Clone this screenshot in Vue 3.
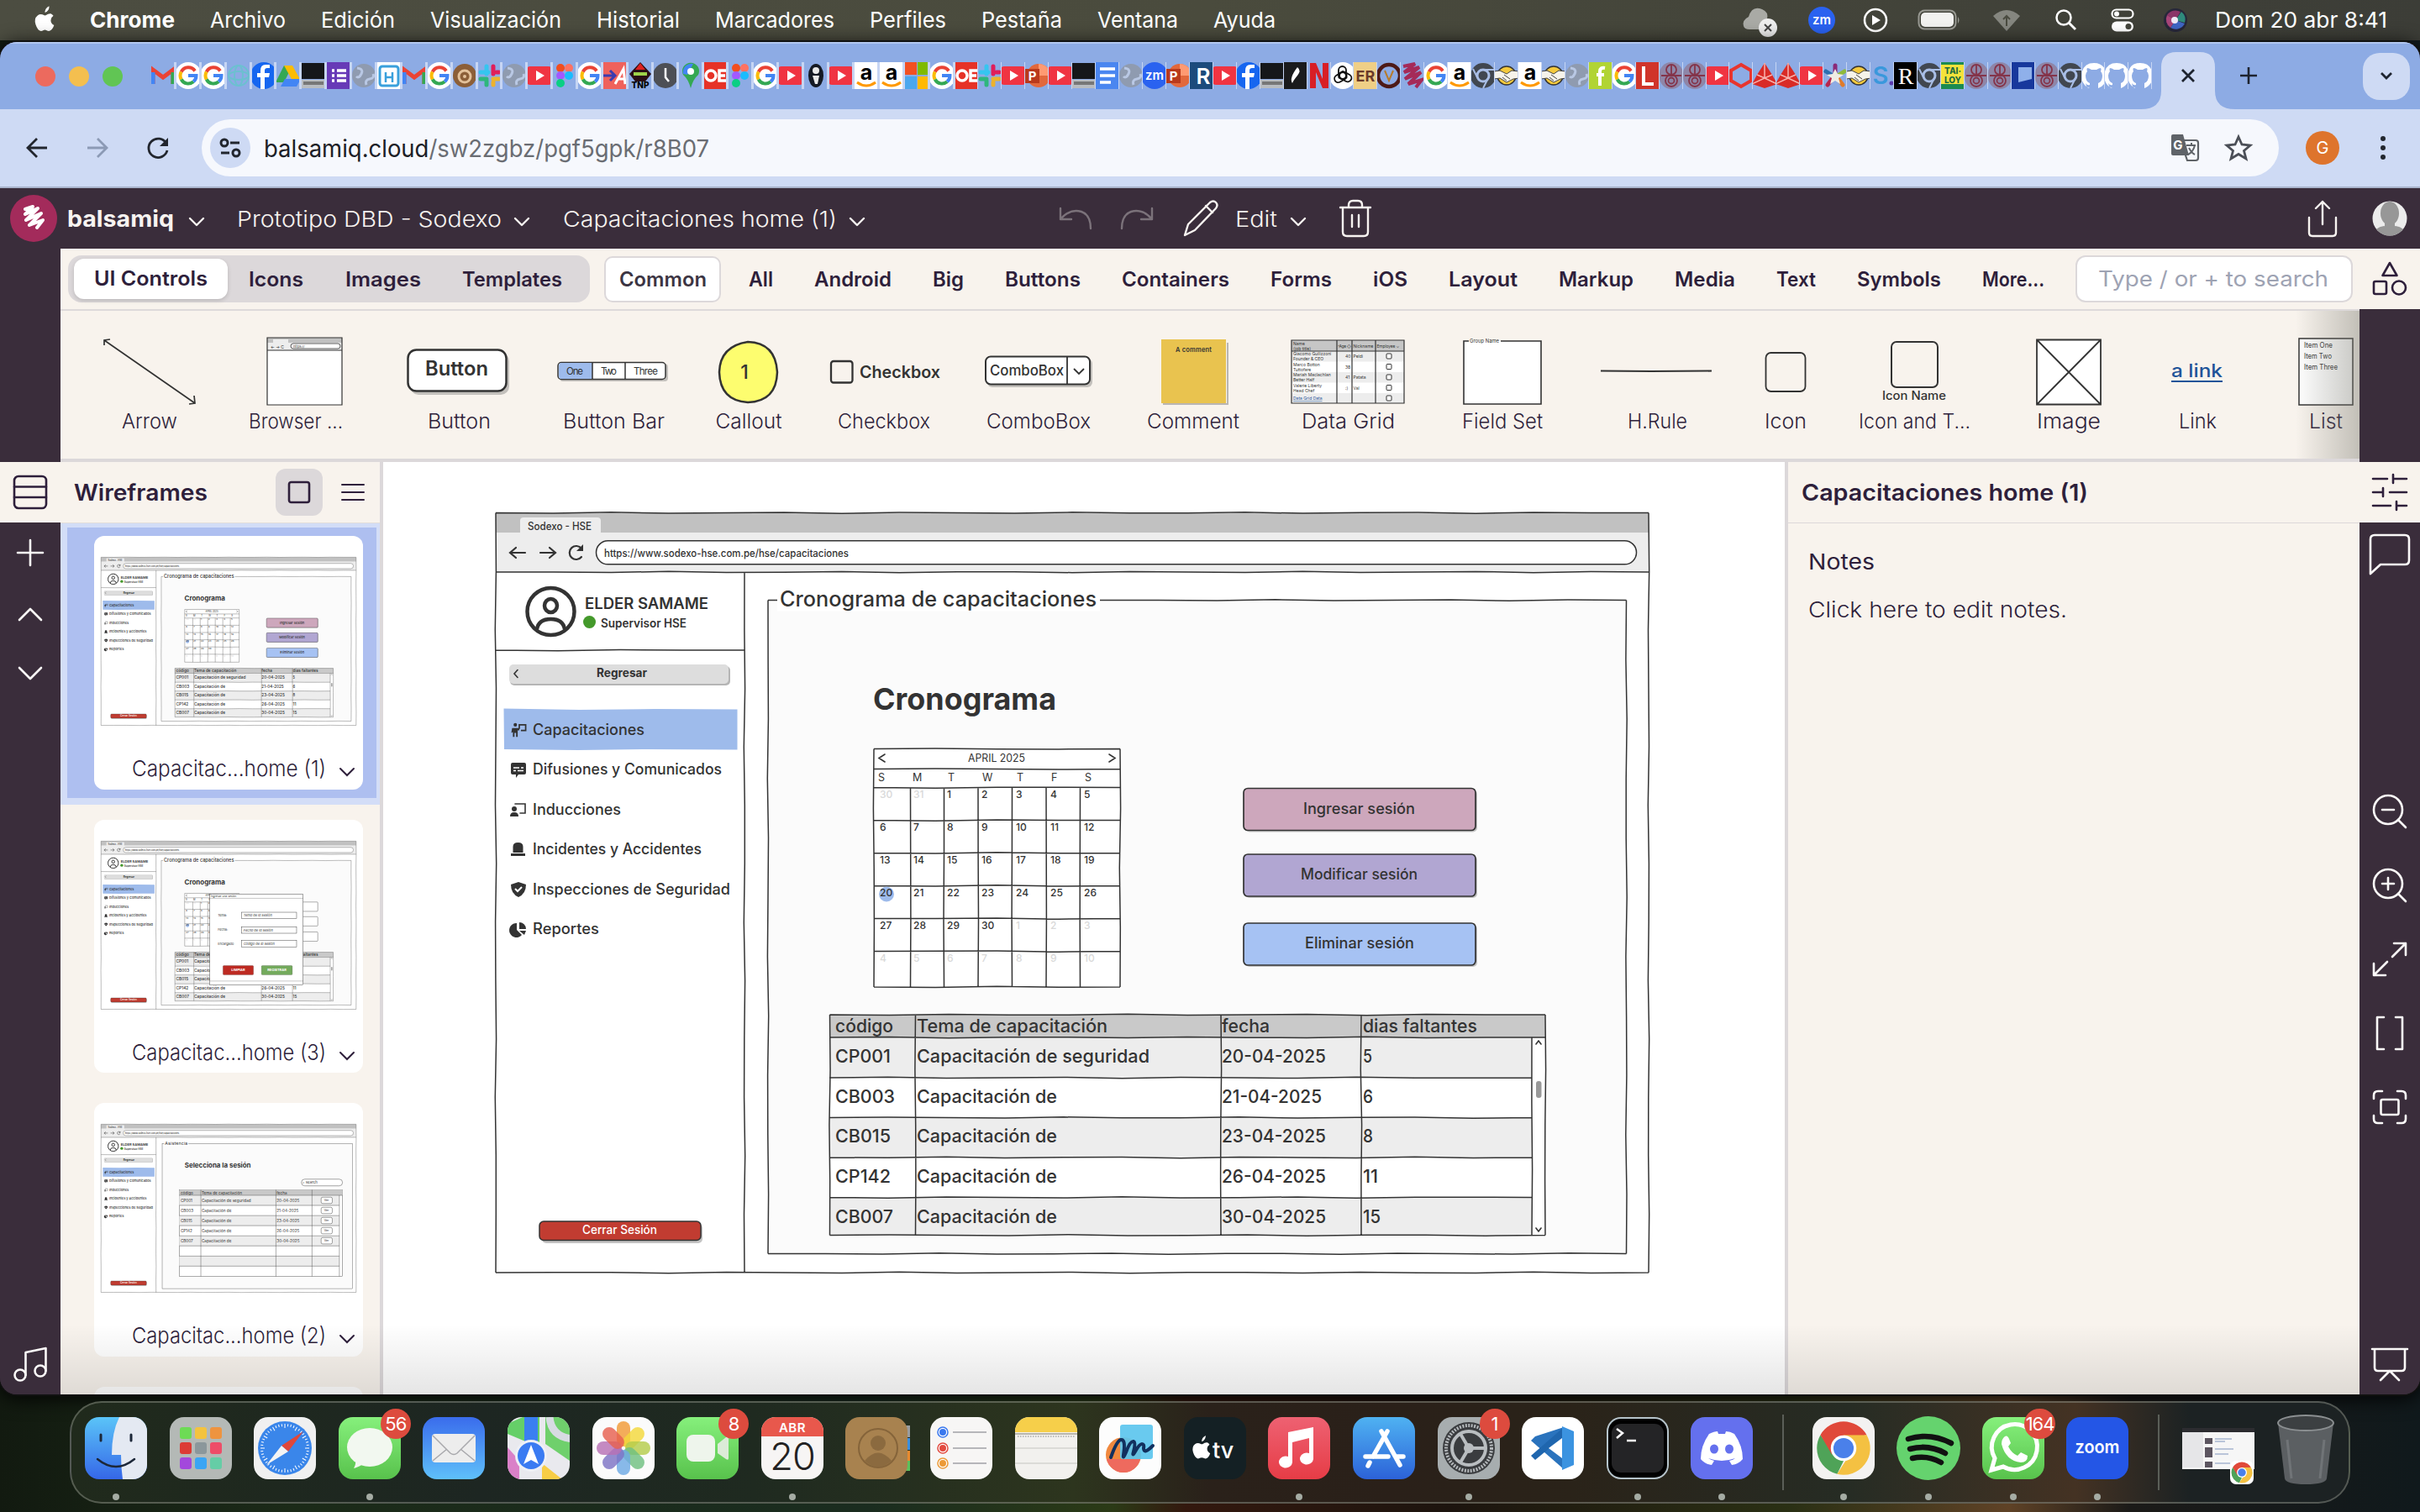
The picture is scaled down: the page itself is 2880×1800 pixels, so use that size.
<script setup>
/* Stretches a label horizontally so that it takes exactly the given width. */
const vFit = {
  mounted(el, { value }) {
    const w = el.getBoundingClientRect().width
    el.style.width = value + 'px'
    el.style.transform = `scaleX(${(value / w).toFixed(4)})`
  },
}

/* Hand-drawn line between two points, with a small deterministic wobble. */
function wob(x1, y1, x2, y2) {
  const len = Math.hypot(x2 - x1, y2 - y1)
  const steps = Math.max(1, Math.round(len / 70))
  const horizontal = y1 === y2
  let d = `M${x1} ${y1}`
  for (let i = 1; i <= steps; i++) {
    const t = i / steps
    const j = i === steps ? 0 : Math.sin(i * 2.3 + x1 * 0.7 + y1 * 1.3) * 0.7
    d += ` L${(x1 + (x2 - x1) * t + (horizontal ? 0 : j)).toFixed(1)} ${(y1 + (y2 - y1) * t + (horizontal ? j : 0)).toFixed(1)}`
  }
  return d
}
const box = (x1, y1, x2, y2) => [wob(x1, y1, x2, y1), wob(x2, y1, x2, y2), wob(x1, y2, x2, y2), wob(x1, y1, x1, y2)].join(' ')

const menus = [['Archivo', 90], ['Edición', 88], ['Visualización', 156], ['Historial', 99], ['Marcadores', 142], ['Perfiles', 91], ['Pestaña', 96], ['Ventana', 96], ['Ayuda', 74]]

const G = '<rect width="32" height="32" rx="16" fill="#fff"/><path d="M24 10.500a9.500 9.500 0 0 0-16.300 1" stroke="#ea4335" stroke-width="4" fill="none"/><path d="M7.700 11.500a9.500 9.500 0 0 0 0 9" stroke="#fbbc05" stroke-width="4" fill="none"/><path d="M7.700 20.500a9.500 9.500 0 0 0 14.500 2.800" stroke="#34a853" stroke-width="4" fill="none"/><path d="M16 16h9.500a9.500 9.500 0 0 1-3.300 7.300" stroke="#4285f4" stroke-width="4" fill="none"/>'
const fav = {
  M: '<path d="M4 26V9l12 9 12-9v17" fill="none" stroke="#ea4335" stroke-width="5"/><path d="M4 26V12" stroke="#4285f4" stroke-width="5"/><path d="M28 26V12" stroke="#34a853" stroke-width="5"/>',
  G,
  atom: '<g fill="none" stroke="#6cc0d0" stroke-width="2"><circle cx="16" cy="16" r="12"/><ellipse cx="16" cy="16" rx="12" ry="5"/><ellipse cx="16" cy="16" rx="5" ry="12"/></g>',
  f: '<circle cx="16" cy="16" r="16" fill="#1666f0"/><path d="M17 32V18h5l1-5h-6v-3q0-3 3-3h3V3h-5q-6 0-6 7v3H8v5h4v14z" fill="#fff"/>',
  drive: '<path d="M11 4h10l-10 20H1z" fill="#34a853"/><path d="M11 4h10l10 18H21z" fill="#fbbc04"/><path d="M7 29l5-9h19l-5 9z" fill="#4285f4"/>',
  lap: '<path d="M2 1h28v19H2z" fill="#15171a"/><path d="M0 21h32v10H0z" fill="#b9bcc0"/><path d="M4 23h24v4H4z" fill="#777"/>',
  forms: '<path d="M1 0h30v32H1z" fill="#673ab7"/><path d="M8 10h3m3 0h11M8 16h3m3 0h11M8 22h3m3 0h11" stroke="#fff" stroke-width="3.500"/>',
  globe: '<circle cx="16" cy="16" r="14" fill="#8f9bb0"/><path d="M8 7q8 1 5 7t-6 3M19 27q-2-6 4-7t4-6" stroke="#b9c8e4" stroke-width="3" fill="none"/>',
  H: '<rect width="32" height="32" fill="#fff"/><rect x="5" y="5" width="22" height="23" rx="3" fill="none" stroke="#3aa0dc" stroke-width="3"/><path d="M12 12v12m8-12v12m-8-6h8" stroke="#3aa0dc" stroke-width="2.500"/>',
  snail: '<circle cx="16" cy="16" r="14" fill="#8c5f38"/><circle cx="16" cy="17" r="7" fill="none" stroke="#e3c19a" stroke-width="3"/><circle cx="16" cy="17" r="2" fill="#e3c19a"/>',
  slack: '<g stroke-width="5" stroke-linecap="round"><path d="M12 5v9" stroke="#36c5f0"/><path d="M5 12h9" stroke="#36c5f0"/><path d="M20 5v9M27 12h-3" stroke="#e01e5a"/><path d="M20 20h7M20 27v-3" stroke="#ecb22e"/><path d="M5 20h7M12 27v-5" stroke="#2eb67d"/></g>',
  yt: '<rect y="5" width="32" height="22" rx="5" fill="#f03442"/><path d="M12 10l10 6-10 6z" fill="#fff"/>',
  figma: '<circle cx="11" cy="7" r="5" fill="#f24e1e"/><circle cx="21" cy="7" r="5" fill="#ff7262"/><circle cx="11" cy="16" r="5" fill="#a259ff"/><circle cx="21" cy="16" r="5" fill="#1abcfe"/><circle cx="11" cy="25" r="5" fill="#0acf83"/>',
  redA: '<rect width="32" height="32" fill="#ef625c"/><path d="M2 16h13M10 10l6 6-6 6" stroke="#3c3cae" stroke-width="3" fill="none"/><path d="M16 26L26 8l2 18M20 20h8" stroke="#fff" stroke-width="3" fill="none"/>',
  tnp: '<path d="M16 0l13 14-7 9H10L3 14z" fill="#2a1015"/><path d="M8 14h16" stroke="#9dd24a" stroke-width="4"/><path d="M16 1l6 8H10z" fill="#d22"/><text x="16" y="31" font-size="10" font-weight="800" text-anchor="middle">TNP</text>',
  clock: '<circle cx="16" cy="16" r="15" fill="#4d4f55"/><path d="M16 7v11l4 5" stroke="#fff" stroke-width="2.500" fill="none"/>',
  maps: '<path d="M16 31Q13 20 7 15a10 10 0 1 1 18 0q-6 5-9 16z" fill="#34a853"/><path d="M7 14a10 10 0 0 1 12-12l-7 13z" fill="#4285f4"/><circle cx="16" cy="11" r="4" fill="#fff"/>',
  OE: '<rect width="32" height="32" fill="#e63227"/><circle cx="10" cy="16" r="6" fill="none" stroke="#fff" stroke-width="3.500"/><path d="M28 10h-8v12h8M20 16h7" fill="none" stroke="#fff" stroke-width="3.500"/>',
  fifa: '<ellipse cx="16" cy="16" rx="9" ry="14" fill="#151a24"/><circle cx="16" cy="10" r="4" fill="#e9e9e9"/><path d="M12 16h8l-2 10h-3z" fill="#e9e9e9"/>',
  a: '<rect width="32" height="32" rx="2" fill="#fff"/><text x="16" y="21" font-size="25" font-weight="700" text-anchor="middle">a</text><path d="M5 24q11 8 22 0" stroke="#f90" stroke-width="3" fill="none"/>',
  ms: '<path d="M1 0h15v15H1z" fill="#f25022"/><path d="M17 0h15v15H17z" fill="#7fba00"/><path d="M1 17h15v15H1z" fill="#4aa7ee"/><path d="M17 17h15v15H17z" fill="#ffb900"/>',
  P: '<circle cx="18" cy="16" r="14" fill="#e2683c"/><path d="M18 2a14 14 0 0 1 14 14H18z" fill="#ff9a72"/><rect x="2" y="8" width="17" height="17" fill="#b93a1c"/><text x="10.500" y="22" font-size="15" font-weight="700" fill="#fff" text-anchor="middle">P</text>',
  docs: '<rect x="1" width="30" height="32" fill="#4a86f0"/><path d="M7 8h18M7 16h18M7 24h13" stroke="#fff" stroke-width="3.500"/>',
  zm: '<circle cx="16" cy="16" r="16" fill="#2a62f0"/><text x="16" y="21" font-size="15" font-weight="600" fill="#fff" text-anchor="middle">zm</text>',
  R: '<rect width="32" height="32" fill="#1c4b7c"/><text x="18" y="26" font-size="26" font-weight="600" fill="#fff" text-anchor="middle">R</text>',
  pen: '<rect width="32" height="32" fill="#1a1b1d"/><path d="M18 6q5 4 0 10t-6 9q-4-6 6-19z" fill="#fff"/>',
  N: '<path d="M5 1h7l8 19V1h7v30h-7L12 12v19H5z" fill="#d81f26"/>',
  gpt: '<circle cx="16" cy="16" r="16" fill="#fff"/><g fill="none" stroke="#111" stroke-width="1.800"><path d="M16 11l4.500 2.500v5L16 21l-4.500-2.500v-5z"/><rect x="11" y="5" width="9" height="15" rx="4.500"/><rect x="11" y="5" width="9" height="15" rx="4.500" transform="rotate(120 16 16)"/><rect x="11" y="5" width="9" height="15" rx="4.500" transform="rotate(240 16 16)"/></g>',
  ER: '<rect width="32" height="32" fill="#efcf86"/><text x="16" y="23" font-size="18" font-weight="700" fill="#6b3a2a" text-anchor="middle">ER</text>',
  Q: '<circle cx="16" cy="16" r="13" fill="none" stroke="#4d1a17" stroke-width="4.500"/><path d="M11 10l5 12 5-12" stroke="#b77b2c" stroke-width="2" fill="none"/>',
  bq: '<path d="M5 5l14-3L6 12l18-6L7 20l19-8L11 26l16-5-7 9" fill="none" stroke="#a52a58" stroke-width="4"/>',
  cr: '<circle cx="16" cy="16" r="15" fill="#414750"/><circle cx="16" cy="16" r="7" fill="none" stroke="#a9bee6" stroke-width="3"/><path d="M16 9h14M9 18L4 8M22 19l-6 12" stroke="#a9bee6" stroke-width="2"/>',
  hs: '<circle cx="16" cy="16" r="11" fill="#f4c93d" stroke="#333" stroke-width="1.500"/><path d="M1 11l7-1 8 4 6-4 9 1v8l-7 1-8 4-8-5-7 1z" fill="#f6f3ea" stroke="#444" stroke-width="1"/><path d="M13 15l7 5M11 18l5 4" stroke="#444"/>',
  gf: '<rect width="32" height="32" fill="#b1d434"/><path d="M15 28V11q0-5 6-4M11 15h9" stroke="#fff" stroke-width="4" fill="none"/>',
  L: '<rect width="32" height="32" fill="#d0342a"/><path d="M11 5v21h12" stroke="#fff" stroke-width="4" fill="none"/>',
  seal: '<rect x="2" y="0" width="28" height="32" rx="14" fill="#8e86a8"/><g fill="none" stroke="#84344a" stroke-width="1.800"><circle cx="16" cy="9" r="6"/><circle cx="16" cy="22" r="7"/><circle cx="16" cy="22" r="3.500"/><path d="M16 4v10M4 16h24"/></g>',
  hex: '<path d="M16 3l12 7v12l-12 7-12-7V10z" fill="none" stroke="#e8352e" stroke-width="4"/>',
  cube: '<path d="M16 1l9 14 6 11-15 5L1 26l6-11z" fill="#d92b26"/><path d="M16 1v18M16 19L1 26M16 19l15 7M7 15l9 4 9-4" stroke="#f7b3ae" stroke-width="1.500" fill="none"/>',
  fl: '<g stroke-width="5" stroke-linecap="round"><path d="M16 14V4" stroke="#8a2a78"/><path d="M19 16l8-5" stroke="#8fba3c"/><path d="M19 19l6 8" stroke="#e07b2a"/><path d="M13 19l-6 8" stroke="#b8264e"/><path d="M13 16L5 11" stroke="#2c6fb0"/></g><path d="M16 8l3 6 7 1-6 4 2 7-6-4-6 4 2-7-6-4 7-1z" fill="#f0ede4"/>',
  S: '<text x="14" y="26" font-size="29" font-weight="600" fill="#3a98dc" text-anchor="middle">S</text><circle cx="27" cy="25" r="2.500" fill="#5b3bb0"/>',
  Rb: '<rect width="32" height="32" fill="#000"/><text x="16" y="26" font-size="28" font-family="Liberation Serif,serif" fill="#fff" text-anchor="middle">R</text>',
  tl: '<rect width="32" height="32" fill="#1c8b50"/><rect x="2" y="3" width="28" height="23" fill="#f5e23b"/><text x="16" y="14" font-size="10" font-weight="800" fill="#1c6b40" text-anchor="middle">TAI·</text><text x="16" y="24.500" font-size="10" font-weight="800" fill="#1c6b40" text-anchor="middle">LOY</text>',
  bl: '<rect width="32" height="32" fill="#17389c"/><path d="M10 6h16v14l-16 4z" fill="#8fb0ea"/>',
  gh: '<path d="M11 31q-9-3-10-14 1-16 15-16t15 16q-1 11-10 14v-6q5-2 5-9 0-3-2-5 1-3 0-4-2 0-5 2h-6q-3-2-5-2-1 1 0 4-2 2-2 5 0 7 5 9v2q-3 1-5-2 1 6 5 6z" fill="#fff"/>',
}
const tabs = 'M G G atom f drive lap forms globe H M G snail slack globe yt figma G redA tnp clock maps OE figma G yt fifa yt a a ms G OE slack yt P yt lap docs globe zm P R yt f lap pen N gpt ER Q bq G a cr hs a hs globe gf G L seal seal yt hex cube cube yt fl hs S Rb cr tl seal seal bl seal cr gh gh gh'.split(' ')

const segs = [['Icons', 65], ['Images', 90], ['Templates', 119]]
const cats = [['All', 29], ['Android', 92], ['Big', 37], ['Buttons', 90], ['Containers', 128], ['Forms', 73], ['iOS', 41], ['Layout', 82], ['Markup', 89], ['Media', 72], ['Text', 47], ['Symbols', 100], ['More...', 74]]

const dk = '#333'
const grid = (() => {
  const rows = [['Giacomo Guilizzoni', 'Founder & CEO', '40', 'Peldi'], ['Marco Botton', 'Tuttofare', '38', ''], ['Mariah Maclachlan', 'Better Half', '41', 'Patata'], ['Valerie Liberty', 'Head Chef', ':)', 'Val']]
  let s = '<rect x="25" y="9" width="134" height="75" fill="#fff"/><rect x="25" y="9" width="134" height="13" fill="#c6c6c6"/>'
  s += '<g font-size="5"><text x="27" y="14.500">Name</text><text x="27" y="20.500">(job title)</text><text x="80" y="17.500" textLength="16">^Age ◇</text><text x="98.500" y="17.500" textLength="24">Nickname</text><text x="126.500" y="17.500" textLength="27">Employee ⌄</text>'
  rows.forEach((r, i) => {
    const y = 22 + i * 12.5
    if (i % 2 === 0) s += `<rect x="25" y="${y}" width="134" height="12.500" fill="#ededed"/>`
    s += `<text x="27" y="${y + 5.300}">${r[0]}</text><text x="27" y="${y + 11.300}">${r[1]}</text><text x="89" y="${y + 8}">${r[2]}</text><text x="98.500" y="${y + 8}">${r[3]}</text><rect x="138" y="${y + 3}" width="6" height="6" rx="1" fill="#fff" stroke="#333"/>`
  })
  return s + '<rect x="25" y="72" width="134" height="12" fill="#ededed"/><text x="27" y="80" fill="#1f5499" text-decoration="underline">Data Grid Data</text><rect x="138" y="75" width="6" height="6" rx="1" fill="#fff" stroke="#333"/></g><path d="M25 9h134v75H25zM79 9v75M97 9v75M125 9v75M25 22h134" fill="none" stroke="#333" stroke-width="1.200"/>'
})()
const controls = [
  { n: 'Arrow', w: 66, c: 184, s: `<path d="M38 9L146 84M38 15V9l7-1M145 75l1 9-7 1" fill="none" stroke="${dk}" stroke-width="1.700"/>` },
  { n: 'Browser ...', w: 112, c: 184, dx: -10, s: '<rect x="48" y="6" width="89" height="80" fill="#fff"/><rect x="48" y="6" width="89" height="6" fill="#c1c1c1"/><rect x="48" y="12" width="89" height="9" fill="#ededed"/><rect x="55" y="8" width="18" height="5" fill="#ededed"/><rect x="76" y="13" width="59" height="6" rx="3" fill="#fff" stroke="#333" stroke-width=".8"/><text x="52" y="18.500" font-size="5">← → C</text><text x="79" y="18" font-size="4">https://</text><path d="M48 21h89M48 6h89v80H48z" fill="none" stroke="#333" stroke-width="1.200"/>' },
  { n: 'Button', w: 75, c: 184, s: '<rect x="34" y="24" width="118" height="50" rx="10" fill="#c3c0bc"/><rect x="31.500" y="20.500" width="117" height="49" rx="10" fill="#fff" stroke="#333" stroke-width="2.500"/><text x="52" y="51" font-size="24" font-weight="600" textLength="75" lengthAdjust="spacingAndGlyphs">Button</text>' },
  { n: 'Button Bar', w: 121, c: 184, s: '<rect x="28" y="37" width="129" height="21" rx="4" fill="#c3c0bc"/><rect x="26" y="35.500" width="128" height="20" rx="4" fill="#fff" stroke="#333" stroke-width="1.500"/><path d="M67 36H30q-3 0-3 4v11q0 4 3 4h37z" fill="#9ebbeb"/><path d="M67 35.500v20M106 35.500v20" stroke="#333" stroke-width="1.500"/><g font-size="11.500"><text x="36" y="49.500" textLength="20">One</text><text x="77" y="49.500" textLength="19">Two</text><text x="116" y="49.500" textLength="29">Three</text></g>' },
  { n: 'Callout', w: 79, c: 138, s: '<path d="M68 11Q101 12 103 47 102 82 68 83 35 81 34 47 35 16 68 11z" fill="#fdfd6f" stroke="#333" stroke-width="2.500"/><text x="64" y="55" font-size="23" text-anchor="middle" font-weight="500">1</text>' },
  { n: 'Checkbox', w: 110, c: 184, s: '<rect x="29" y="34" width="25.500" height="25.500" rx="3" fill="none" stroke="#333" stroke-width="2.300"/><text x="63" y="54" font-size="20" font-weight="600" textLength="96" lengthAdjust="spacingAndGlyphs">Checkbox</text>' },
  { n: 'ComboBox', w: 124, c: 184, s: '<rect x="31" y="31" width="125" height="34" rx="6" fill="#c3c0bc"/><rect x="29" y="28.500" width="124" height="33" rx="6" fill="#fff" stroke="#333" stroke-width="2"/><path d="M126 28.500v33M134 43l6 6 6-6" stroke="#333" stroke-width="1.800" fill="none"/><text x="34" y="51" font-size="17" font-weight="500" textLength="88" lengthAdjust="spacingAndGlyphs">ComboBox</text>' },
  { n: 'Comment', w: 110, c: 184, s: '<rect x="54" y="8" width="77" height="76" fill="#e9c34f"/><path d="M56 85h77V12" fill="none" stroke="#b9b6b4" stroke-width="2"/><text x="71" y="23" font-size="7.500" font-weight="600" textLength="43">A comment</text>' },
  { n: 'Data Grid', w: 111, c: 184, s: grid },
  { n: 'Field Set', w: 96, c: 184, s: '<rect x="46" y="10" width="92" height="75" fill="#fff"/><path d="M52 10h-6v75h92V10H90" fill="none" stroke="#333" stroke-width="1.600"/><text x="53" y="12" font-size="6.500" textLength="35" lengthAdjust="spacingAndGlyphs">Group Name</text>' },
  { n: 'H.Rule', w: 71, c: 184, s: '<path d="M25 45.500l60 .5 72-.5" fill="none" stroke="#333" stroke-width="2.200"/>' },
  { n: 'Icon', w: 50, c: 122, s: '<rect x="37.500" y="24" width="47" height="46" rx="6" fill="none" stroke="#333" stroke-width="1.800"/>' },
  { n: 'Icon and T...', w: 133, c: 184, s: '<rect x="65" y="11" width="55" height="54" rx="6" fill="none" stroke="#333" stroke-width="2"/><text x="54" y="80" font-size="14" font-weight="500" textLength="76" lengthAdjust="spacingAndGlyphs">Icon Name</text>' },
  { n: 'Image', w: 76, c: 184, s: '<path d="M54 8.500h76v77H54zM54 8.500l76 77M130 8.500l-76 77" fill="#fff" stroke="#333" stroke-width="1.800"/>' },
  { n: 'Link', w: 45, c: 122, s: '<text x="30" y="53" font-size="22" font-weight="500" fill="#1f5499" textLength="61" lengthAdjust="spacingAndGlyphs">a link</text><path d="M30 58h61" stroke="#1f5499" stroke-width="2.200"/>' },
  { n: 'List', w: 40, c: 184, s: '<rect x="60" y="7" width="64" height="79" fill="#fff" stroke="#333" stroke-width="1.500"/><g font-size="9"><text x="66" y="18" textLength="34" lengthAdjust="spacingAndGlyphs">Item One</text><text x="66" y="31" textLength="33" lengthAdjust="spacingAndGlyphs">Item Two</text><text x="66" y="44" textLength="40" lengthAdjust="spacingAndGlyphs">Item Three</text></g>' },
]

/* Texts of the wireframe: [text, x, baseline, width, size, weight, colour] */
const baseTexts = [
  ['Sodexo - HSE', 628, 631, 76, 12.5, 500],
  ['https://www.sodexo-hse.com.pe/hse/capacitaciones', 719, 662.5, 291, 12.5, 500],
  ['ELDER SAMAME', 696, 725, 147, 18.5, 600],
  ['Supervisor HSE', 715, 747, 102, 14, 600],
  ['Regresar', 710, 806, 60, 14, 700],
  ['Capacitaciones', 634, 874.5, 133, 18, 500],
  ['Difusiones y Comunicados', 634, 922, 225, 18, 500],
  ['Inducciones', 634, 969.5, 105, 18, 500],
  ['Incidentes y Accidentes', 634, 1017, 201, 18, 500],
  ['Inspecciones de Seguridad', 634, 1064.5, 235, 18, 500],
  ['Reportes', 634, 1112, 79, 18, 500],
  ['Cerrar Sesión', 693, 1469, 89, 14, 500, '#fff'],
]
const actionBtns = [
  { t: 'Ingresar sesión', y: 938.5, x: 1551, w: 133, f: '#cda7bc' },
  { t: 'Modificar sesión', y: 1017, x: 1548, w: 139, f: '#b1a6d2' },
  { t: 'Eliminar sesión', y: 1099, x: 1553, w: 130, f: '#a6c2f3' },
]
const calCols = [1083.5, 1123.5, 1164, 1204.5, 1245, 1285.5]
const calRows = [937.5, 976.5, 1015.5, 1054.5, 1093.5, 1132.5]
const dayX = [1047, 1087, 1127, 1168, 1209, 1250, 1290]
const days = Array.from({ length: 42 }, (_, i) => {
  const d = i - 1
  const out = d < 1 || d > 30
  return { n: d < 1 ? 30 + i : d > 30 ? d - 30 : d, out, x: dayX[i % 7], y: 949.5 + Math.floor(i / 7) * 39.1 }
})
const rows = [
  ['CP001', 66, 'Capacitación de seguridad', 277, '20-04-2025', 124, '5', 11],
  ['CB003', 71, 'Capacitación de', 167, '21-04-2025', 119, '6', 12],
  ['CB015', 66, 'Capacitación de', 167, '23-04-2025', 124, '8', 12],
  ['CP142', 66, 'Capacitación de', 167, '26-04-2025', 124, '11', 18],
  ['CB007', 69, 'Capacitación de', 167, '30-04-2025', 124, '15', 21],
]
const rowTop = [1235, 1283, 1330.5, 1378, 1425.5, 1471]
const cards = [
  { t: 'Capacitac...home (1)', k: 1 },
  { t: 'Capacitac...home (3)', k: 3 },
  { t: 'Capacitac...home (2)', k: 2 },
  { k: 4 },
]

const sq = (fill) => `<rect width="74" height="74" rx="17" fill="${fill}"/>`
const chromeMark = '<path d="M37 37L17.400 25.700A22.600 22.600 0 0 1 59.600 33z" fill="#e0493a"/><path d="M12 37a25 25 0 0 1 3.350-12.500L28 43l9 6-6 12.300A25 25 0 0 1 12 37z" fill="#4fa358"/><path d="M58.600 24.500A25 25 0 0 1 31 61.300L44 41l-7-16.500z" fill="#f4c142"/><path d="M15.350 24.500a25 25 0 0 1 43.250 0H37L26 43z" fill="#e0493a"/><circle cx="37" cy="37" r="12" fill="#fff"/><circle cx="37" cy="37" r="9.500" fill="#4a80ea"/>'
const petals = ['#f09a36', '#f3d83b', '#b4cc4b', '#6fbf80', '#6ea9e4', '#7c73c4', '#b770b4', '#e6604f'].map((c, i) => `<rect x="29" y="5" width="16" height="30" rx="8" fill="${c}" opacity=".82" transform="rotate(${i * 45} 37 37)"/>`).join('')
const ticks = Array.from({ length: 48 }, (_, i) => `<path d="M37 8v${i % 4 ? 3 : 5}" stroke="#fff" stroke-width="1" transform="rotate(${i * 7.5} 37 37)"/>`).join('')
const pads = ['#6ddb55', '#f4c33e', '#ee9440', '#dc3b34', '#8b979b', '#ee4d68', '#a348dc', '#3aa5f4', '#65cda6'].map((c, i) => `<rect x="${12 + (i % 3) * 18}" y="${12 + Math.floor(i / 3) * 18}" width="14" height="14" rx="3" fill="${c}"/>`).join('')
const apple = 'M20 10.500q-3.200-.2-5.200 1.700Q13.500 13 12.300 12.300 8.500 10 5.200 12.600 1 16 3 22.500 5.200 29.500 9 30q1.300 0 2.800-.8 1.600-.8 3.200 0 1.500.8 2.900.8 3.700-.4 5.800-6.400-3.800-1.800-3.700-5.700.1-3 2.900-4.900-1.300-2-2.900-2.500zM13.500 9.500q-.3-5 4.700-7.500.3 5.200-4.700 7.500z'
const dockA = [
  { s: '<defs><linearGradient id="fb" x2="0" y2="1"><stop stop-color="#5ac4f8"/><stop offset="1" stop-color="#3567e8"/></linearGradient><linearGradient id="gr" x2="0" y2="1"><stop stop-color="#86f07c"/><stop offset="1" stop-color="#58c24c"/></linearGradient><linearGradient id="bb" x2="0" y2="1"><stop stop-color="#3a6cec"/><stop offset="1" stop-color="#5fc0fa"/></linearGradient><linearGradient id="as" x2="0" y2="1"><stop stop-color="#4fb2f2"/><stop offset="1" stop-color="#2c62d8"/></linearGradient><linearGradient id="mu" x2="0" y2="1"><stop stop-color="#ee6172"/><stop offset="1" stop-color="#e63c46"/></linearGradient></defs>' + sq('url(#fb)') + '<path d="M41 0h16a17 17 0 0 1 17 17v40a17 17 0 0 1-17 17H45q-2-14-2-29H32Q32 18 41 0z" fill="#e4e9f2"/><path d="M19 21v7M55 21v7" stroke="#1c2738" stroke-width="3" stroke-linecap="round"/><path d="M15 50q22 18 44 0" fill="none" stroke="#1c2738" stroke-width="2.500" stroke-linecap="round"/>', dot: 1 },
  { s: sq('#b4b9b6') + pads },
  { s: sq('#f0f0f0') + '<circle cx="37" cy="37" r="32" fill="#3a86ea"/>' + ticks + '<path d="M59 17L41 41l-8-7z" fill="#e0473a"/><path d="M15 57l18-23 8 7z" fill="#f4f4f4"/>' },
  { s: sq('url(#gr)') + '<ellipse cx="37" cy="36" rx="27" ry="23" fill="#f2f8f0"/><path d="M20 50q1 6-2 11 8-2 13-7z" fill="#f2f8f0"/>', dot: 1, b: '56' },
  { s: sq('url(#bb)') + '<rect x="11" y="20" width="52" height="34" rx="4" fill="#ededed"/><path d="M12 22l21 21q4 3 8 0l21-21M12 52l17-14M62 52L45 38" fill="none" stroke="#a8a8ac" stroke-width="1.500"/>' },
  { s: '<clipPath id="mp"><rect width="74" height="74" rx="17"/></clipPath><g clip-path="url(#mp)"><rect width="74" height="74" fill="#e9e9ee"/><path d="M0 8L18 0h20v36L0 20z" fill="#65cf68"/><path d="M45 0h29v52L45 32z" fill="#6fd06c"/><path d="M50 0q2 24 28 26" fill="none" stroke="#d7dbe2" stroke-width="9"/><path d="M0 36l16 18v20H0z" fill="#da80c8"/><path d="M20 0h16v74H20z" fill="#3a7ff0"/><path d="M14 42h30v32H14z" fill="#e9e9ee"/><path d="M41 55l24 19H41z" fill="#f7cd46"/></g><circle cx="28" cy="46" r="19" fill="#eef0f6"/><circle cx="28" cy="46" r="16" fill="#3a7bf2"/><path d="M28 33l9 23-9-5-9 5z" fill="#fff"/>' },
  { s: sq('#fbfbfb') + petals },
  { s: sq('url(#gr)') + '<rect x="12" y="21" width="34" height="32" rx="8" fill="#eef5ec"/><path d="M49 32l10-8q3-1 3 2v23q0 3-3 1l-10-7z" fill="#dcebd8"/>', b: '8' },
  { s: sq('#f7f5f4') + '<path d="M0 23V17A17 17 0 0 1 17 0h40a17 17 0 0 1 17 17v6z" fill="#e8584c"/><text x="37" y="18" font-size="15" font-weight="600" fill="#fff" text-anchor="middle" letter-spacing=".5">ABR</text><text x="37" y="63" font-size="45" font-weight="300" fill="#222" text-anchor="middle" letter-spacing="-1">20</text>', dot: 1 },
  { s: '<path d="M66 10h11v14H66z" fill="#9a9d9f"/><path d="M66 25h11v14H66z" fill="#3a8fe0"/><path d="M66 40h11v12H66z" fill="#e88a2e"/><path d="M66 52h11v12H66z" fill="#5cc05c"/>' + sq('#a8824f') + '<g fill="none" stroke="#85643a" stroke-width="2"><circle cx="39" cy="37" r="23"/></g><circle cx="39" cy="31" r="9" fill="#8b6a3f"/><path d="M23 52q16-19 32 0-16 15-32 0z" fill="#8b6a3f"/>' },
  { s: sq('#f7f6f5') + '<g fill="#fff" stroke-width="1.500"><circle cx="15" cy="18" r="6" stroke="#3a78ee"/><circle cx="15" cy="37" r="6" stroke="#e24a3f"/><circle cx="15" cy="55" r="6" stroke="#ec9a38"/></g><circle cx="15" cy="18" r="4" fill="#3a78ee"/><circle cx="15" cy="37" r="4" fill="#e24a3f"/><circle cx="15" cy="55" r="4" fill="#ec9a38"/><path d="M27 18h40M27 37h40M27 55h40" stroke="#b6b6ba" stroke-width="2"/>' },
  { s: sq('#f2f1ee') + '<path d="M0 18V17A17 17 0 0 1 17 0h40a17 17 0 0 1 17 17v1z" fill="#f6cf4a"/><path d="M0 20h74" stroke="#b9b6ac" stroke-width="2"/><path d="M3 23h68" stroke="#aaa" stroke-width="1.500" stroke-dasharray="1.500 1.500"/><path d="M0 37h74M0 55h74" stroke="#d4d3d0" stroke-width="1.500"/>' },
  { s: sq('#fdfdfd') + '<circle cx="29" cy="45" r="21" fill="#f0883e"/><path d="M29 66a21 21 0 0 0 20-16H9a21 21 0 0 0 20 16z" fill="#ee6a5e"/><rect x="25" y="9" width="39" height="41" rx="3" fill="#5cc6ee" opacity=".92"/><path d="M14 48q7-20 12-21 6-1 3 18-1 6 3-3 5-14 9-13 3 1 0 12-2 7 2 0 5-9 8-9 3 0 2 5 0 8 11-3" fill="none" stroke="#12305e" stroke-width="4" stroke-linecap="round"/>' },
  { s: sq('#142024') + `<path d="${apple}" transform="translate(8 20) scale(.98)" fill="#fff"/><text x="34" y="49" font-size="27" font-weight="500" fill="#fff">tv</text>` },
  { s: sq('url(#mu)') + '<path d="M54 12v38a8 7 0 1 1-5-7V25l-20 5v24a8 7 0 1 1-5-7V18z" fill="#fff"/>', dot: 1 },
  { s: sq('url(#as)') + '<g stroke="#fff" stroke-width="5.500" stroke-linecap="round"><path d="M41 17L24 47M34 17l22 40M15 47h27M52 47h8M20 54l-2 4"/></g>' },
  { s: sq('#a7adaf') + '<circle cx="37" cy="37" r="31" fill="#3a3c3f"/><circle cx="37" cy="37" r="27" fill="none" stroke="#b4b8bb" stroke-width="4" stroke-dasharray="2 1.500"/><circle cx="37" cy="37" r="20" fill="none" stroke="#b9bdc0" stroke-width="4"/><path d="M37 37h20M37 37L27 20M37 37L27 54" stroke="#b9bdc0" stroke-width="4"/><circle cx="37" cy="37" r="6" fill="#b9bdc0"/>', dot: 1, b: '1' },
  { s: sq('#fff') + '<path d="M50 12v50L11 28l5-5z" fill="#2a73bd"/><path d="M50 12L11 46l5 5 34-28z" fill="#1f66ae"/><path d="M48 11l14 6v40l-14 6z" fill="#3b93e0"/><path d="M48 25v24L32 37z" fill="#fff"/>' },
  { s: sq('#b6c4cb') + '<rect x="2" y="2" width="70" height="70" rx="15" fill="#000"/><rect x="6" y="8" width="62" height="58" rx="11" fill="#242426"/><path d="M12 14l7 5-7 6M24 28h11" fill="none" stroke="#fff" stroke-width="2.500"/>', dot: 1 },
  { s: sq('#6470ee') + '<path d="M22 20q6-3 10-3l1 3h8l1-3q5 0 10 3 10 14 10 30-5 6-13 7l-3-5q5-1 7-3-16 6-32 0 3 2 7 3l-3 5q-8-1-13-7 0-16 10-30z" fill="#fff"/><ellipse cx="28" cy="38" rx="5" ry="5.500" fill="#6470ee"/><ellipse cx="46" cy="38" rx="5" ry="5.500" fill="#6470ee"/>', dot: 1 },
]
const dockB = [
  { s: sq('#f3f2f1') + '<g transform="translate(37 37) scale(1.270) translate(-37 -37)">' + chromeMark + '</g>', dot: 1 },
  { s: '<circle cx="37" cy="37" r="38" fill="#65d36e"/><path d="M13 26q26-8 51 5M15 38q22-6 42 5M18 49q18-4 34 5" fill="none" stroke="#111" stroke-width="6.500" stroke-linecap="round"/>', dot: 1 },
  { s: sq('url(#gr)') + '<path d="M11 63l4-14a27 27 0 1 1 10 10z" fill="none" stroke="#fff" stroke-width="5"/><path d="M27 23q3-2 5 3l2 5-3 4q4 8 11 11l4-4 8 4q0 8-8 8-18-2-23-22 0-6 4-9z" fill="#fff"/>', dot: 1, b: '164' },
  { s: sq('#2456e6') + '<text x="37" y="43" font-size="21" font-weight="600" fill="#fff" text-anchor="middle" textLength="53" lengthAdjust="spacingAndGlyphs">zoom</text>', dot: 1 },
]
</script>

<template>
  <div class="desktop">
    <header class="menubar">
      <svg class="apple" width="28" height="34" viewBox="0 0 26 32"><path :d="apple" fill="#fff" /></svg>
      <span v-fit="101" class="app-name">Chrome</span>
      <span v-for="m in menus" :key="m[0]" v-fit="m[1]">{{ m[0] }}</span>
      <div class="status">
        <svg width="44" height="40" viewBox="0 0 44 40"><path d="M2 27Q0 20 8 16 12 2 24 7q8 3 6 12 6 3 4 12H9q-6 0-7-4z" fill="#a9aaa5" /><circle cx="31" cy="29" r="11" fill="#eee" /><path d="M27 25l8 8m0-8l-8 8" stroke="#444" stroke-width="2" /></svg>
        <svg class="s-zm" width="32" height="32" viewBox="0 0 32 32" v-html="fav.zm"></svg>
        <svg class="s-play" width="30" height="30" viewBox="0 0 30 30"><circle cx="15" cy="15" r="13" fill="none" stroke="#fff" stroke-width="2.500" /><path d="M11 9l10 6-10 6z" fill="#fff" /></svg>
        <svg class="s-bat" width="52" height="26" viewBox="0 0 52 26"><rect x="1.500" y="1.500" width="44" height="22" rx="7" fill="none" stroke="#999a93" stroke-width="2" /><rect x="4" y="4" width="39" height="17" rx="5" fill="#f2f2f0" /><path d="M48 9q3 4 0 8z" fill="#999a93" /></svg>
        <svg class="s-wifi" width="34" height="26" viewBox="0 0 34 26"><path d="M1 8Q17-6 33 8L17 26z" fill="#85867f" /><path d="M17 20V8m-4 4l4-4 4 4" stroke="#4a4b40" stroke-width="2" fill="none" /></svg>
        <svg class="s-find" width="28" height="28" viewBox="0 0 28 28"><circle cx="11" cy="11" r="8.500" fill="none" stroke="#fff" stroke-width="2.500" /><path d="M17 17l8 8" stroke="#fff" stroke-width="3" /></svg>
        <svg class="s-cc" width="28" height="28" viewBox="0 0 28 28"><rect x="1.500" y="1.500" width="25" height="10" rx="5" fill="none" stroke="#fff" stroke-width="2.200" /><circle cx="7" cy="6.500" r="3" fill="#fff" /><rect x="1" y="15.500" width="26" height="12" rx="6" fill="#fff" /><circle cx="21" cy="21.500" r="3.500" fill="#44453b" /></svg>
        <svg class="s-siri" width="28" height="28" viewBox="0 0 28 28"><circle cx="14" cy="14" r="14" fill="#27273a" /><path d="M14 14L4 8a12 12 0 0 1 16-4z" fill="#8a3468" /><path d="M14 14l7-10a12 12 0 0 1 4 13z" fill="#2f8a7c" /><path d="M14 14l11 4a12 12 0 0 1-17 5z" fill="#3f66c4" /><path d="M14 14l-6 9A12 12 0 0 1 4 8z" fill="#a84478" /><circle cx="13" cy="14" r="4" fill="#efe8f6" /></svg>
        <span v-fit="205">Dom 20 abr 8:41</span>
      </div>
    </header>

    <main class="window">
      <div class="tabstrip">
        <i class="light red"></i><i class="light yellow"></i><i class="light green"></i>
        <div class="favs">
          <span v-for="(t, i) in tabs" :key="i" class="fav" :class="{ wide: i < 32 }"><svg width="28" height="32" viewBox="0 0 32 32" preserveAspectRatio="xMidYMid slice" v-html="fav[t]"></svg></span>
        </div>
        <svg class="active-tab" width="112" height="70" viewBox="0 0 112 70"><path d="M0 70q24 0 24-22V20Q24 2 42 2h28q18 0 18 18v28q0 22 24 22z" fill="#cedaf4" /><path d="M49 23l14 14m0-14L49 37" stroke="#1e2430" stroke-width="2.800" /></svg>
        <svg class="plus" width="24" height="24" viewBox="0 0 24 24"><path d="M12 2v20M2 12h20" stroke="#1e2430" stroke-width="2.600" /></svg>
        <span class="tab-menu"><svg width="20" height="14" viewBox="0 0 20 14"><path d="M4 3l6 6 6-6" fill="none" stroke="#1e2430" stroke-width="2.800" /></svg></span>
      </div>
      <div class="toolbar">
        <svg class="t-back" width="28" height="28" viewBox="0 0 28 28"><path d="M26 14H4M14 3L3 14l11 11" fill="none" stroke="#22262e" stroke-width="2.800" /></svg>
        <svg class="t-fwd" width="28" height="28" viewBox="0 0 28 28"><path d="M2 14h22M14 3l11 11-11 11" fill="none" stroke="#8c9ab5" stroke-width="2.800" /></svg>
        <svg class="t-rel" width="28" height="28" viewBox="0 0 28 28"><path d="M24 9a11.200 11.200 0 1 0 1 8" fill="none" stroke="#22262e" stroke-width="2.800" /><path d="M26 2v10H16z" fill="#22262e" /></svg>
        <div class="url">
          <span class="site"><svg width="28" height="28" viewBox="0 0 28 28" fill="none" stroke="#22262e" stroke-width="3"><circle cx="7" cy="8" r="4" /><path d="M14 8h11M3 20h10" /><circle cx="21" cy="20" r="4" /></svg></span>
          <span v-fit="530" class="url-text"><b>balsamiq.cloud</b>/sw2zgbz/pgf5gpk/r8B07</span>
          <svg class="tr" width="34" height="34" viewBox="0 0 34 34"><path d="M12 8h18q3 0 3 3v18q0 3-3 3H20z" fill="none" stroke="#5f6368" stroke-width="2.200" /><path d="M3 1h12l7 25H3q-2 0-2-2V3q0-2 2-2z" fill="#5f6368" /><text x="9" y="19" font-size="15" font-weight="700" fill="#fff" text-anchor="middle">G</text><path d="M19 14h11M25 11v3m4 0q-2 8-8 11m1-8q3 6 7 8" stroke="#5f6368" stroke-width="2" fill="none" /></svg>
          <svg class="star" width="32" height="32" viewBox="0 0 32 32"><path d="M16 3l4 9 10 1-7.500 6.500L25 29l-9-5.500L7 29l2.500-9.500L2 13l10-1z" fill="none" stroke="#4b4f57" stroke-width="2.800" /></svg>
        </div>
        <span class="me">G</span>
        <svg class="kebab" width="8" height="32" viewBox="0 0 8 32"><circle cx="4" cy="5" r="3" /><circle cx="4" cy="16" r="3" /><circle cx="4" cy="27" r="3" /></svg>
      </div>

      <div class="bq-head">
        <svg class="logo" width="56" height="56" viewBox="0 0 56 56"><circle cx="28" cy="28" r="28" fill="#a32b5b" /><path d="M18 17l9-3-9 9 15-7-14 14 18-8-14 14 16-6-7 9" fill="none" stroke="#fff" stroke-width="4" stroke-linecap="round" stroke-linejoin="round" /></svg>
        <b v-fit="127" class="brand">balsamiq</b>
        <svg class="chev c1" viewBox="0 0 20 12"><path d="M2 2l8 8 8-8" /></svg>
        <span v-fit="315" class="proj">Prototipo DBD - Sodexo</span>
        <svg class="chev c1" viewBox="0 0 20 12"><path d="M2 2l8 8 8-8" /></svg>
        <span v-fit="326" class="proj p-two">Capacitaciones home (1)</span>
        <svg class="chev c1" viewBox="0 0 20 12"><path d="M2 2l8 8 8-8" /></svg>
        <svg class="undo" width="42" height="30" viewBox="0 0 42 30"><path d="M3 3v13h13M3 16Q14 3 28 7q11 4 11 20" /></svg>
        <svg class="redo" width="42" height="30" viewBox="0 0 42 30"><path d="M39 3v13H26M39 16Q28 3 14 7 3 11 3 27" /></svg>
        <svg class="pencil" width="44" height="46" viewBox="0 0 44 46"><path d="M3 43l4-13L33 4q4-3 7 0t0 7L15 37zM28 8l8 8" /></svg>
        <span v-fit="50" class="edit">Edit</span>
        <svg class="chev c2" viewBox="0 0 20 12"><path d="M2 2l8 8 8-8" /></svg>
        <svg class="trash" width="40" height="46" viewBox="0 0 40 46"><path d="M2 10h36M12 10V7q0-5 5-5h6q5 0 5 5v3M5 10v29q0 5 5 5h20q5 0 5-5V10M16 19v14M24 19v14" /></svg>
        <svg class="share" width="40" height="46" viewBox="0 0 40 46"><path d="M20 30V3M12 11l8-8 8 8M4 22v18q0 4 4 4h24q4 0 4-4V22" /></svg>
        <svg class="user" width="42" height="42" viewBox="0 0 42 42"><defs><clipPath id="uc"><circle cx="21" cy="21" r="20.500" /></clipPath></defs><g clip-path="url(#uc)"><rect width="42" height="42" fill="#ececec" /><ellipse cx="21" cy="15" rx="11" ry="14" fill="#979797" /><path d="M2 42q1-11 12-12l7 2 7-2q11 1 12 12z" fill="#979797" /><rect x="15" y="22" width="12" height="12" fill="#979797" /></g></svg>
      </div>

      <div class="app">
        <aside class="rail">
          <div class="rail-gap"></div>
          <div class="rail-cell"><svg width="42" height="42" viewBox="0 0 42 42" class="ink"><rect x="2" y="2" width="38" height="38" rx="5" /><path d="M2 14.500h38M2 27h38" /></svg></div>
          <svg class="r-plus pale" width="32" height="32" viewBox="0 0 32 32"><path d="M16 1v30M1 16h30" /></svg>
          <svg class="r-up pale" width="30" height="18" viewBox="0 0 30 18"><path d="M2 16L15 3l13 13" /></svg>
          <svg class="r-down pale" width="30" height="18" viewBox="0 0 30 18"><path d="M2 2l13 13L28 2" /></svg>
          <svg class="r-music pale" width="42" height="42" viewBox="0 0 42 42"><circle cx="9" cy="34" r="6.500" /><circle cx="33" cy="29" r="6.500" /><path d="M15.500 34V7l24-5v27" /></svg>
        </aside>

        <section class="center">
          <nav class="tabs">
            <div class="seg">
              <span class="seg-on"><span v-fit="135">UI Controls</span></span>
              <span v-for="s in segs" :key="s[0]" v-fit="s[1]">{{ s[0] }}</span>
            </div>
            <span class="common"><span v-fit="104">Common</span></span>
            <span v-for="c in cats" :key="c[0]" v-fit="c[1]" class="cat">{{ c[0] }}</span>
            <span class="search"><span v-fit="274">Type / or + to search</span></span>
          </nav>
          <div class="controls">
            <div v-for="c in controls" :key="c.n" class="control" :style="{ width: c.c + 'px' }">
              <svg :width="c.c" height="90" fill="#333" v-html="c.s"></svg>
              <div class="control-name" :class="{ shifted: c.dx }"><span v-fit="c.w">{{ c.n }}</span></div>
            </div>
            <div class="fade"></div>
          </div>

          <div class="panes">
            <section class="wf">
              <div class="wf-head">
                <b v-fit="159">Wireframes</b>
                <span class="grid-btn"><svg width="28" height="28" viewBox="0 0 28 28" class="ink"><rect x="2" y="2" width="24" height="24" rx="2.500" /></svg></span>
                <svg width="28" height="24" viewBox="0 0 28 24" class="ink thin"><path d="M1 3h26M1 12h26M1 21h26" /></svg>
              </div>
              <div class="cards">
                <div v-for="c in cards" :key="c.k" class="card-wrap" :class="{ sel: c.k === 1 }">
                  <div class="card">
                    <svg v-if="c.k !== 4" class="thumb" width="304" height="201" viewBox="589 609 1374 908">
                      <use href="#wf-base" />
                      <template v-if="c.k !== 2">
                        <use href="#wf-field" /><use href="#wf-cal" />
                        <use v-if="c.k === 1" href="#wf-buttons" />
                        <g v-else fill="#fff" stroke="#333" stroke-width="1.800"><rect x="1480" y="938" width="276" height="50" rx="4" /><rect x="1480" y="1017" width="276" height="50" rx="4" /><rect x="1480" y="1099" width="276" height="50" rx="4" /></g>
                        <use href="#wf-table" />
                      </template>
                      <g v-if="c.k === 3" class="sk">
                        <rect x="1175" y="895" width="502" height="490" fill="#fff" stroke="#333" stroke-width="2" /><path d="M1175 918h502M1175 1363h502" stroke="#555" stroke-width="1.500" />
                        <text x="1180" y="912" font-size="15">Ingresar una sesión</text>
                        <g font-size="17"><text x="1218" y="1016">Tema:</text><text x="1218" y="1094">Fecha:</text><text x="1218" y="1170">Encargado</text></g>
                        <g fill="#fff" stroke="#333" stroke-width="2"><rect x="1346" y="993" width="296" height="35" /><rect x="1346" y="1071" width="296" height="35" /><rect x="1346" y="1145" width="296" height="35" /></g>
                        <g font-size="18" font-style="italic"><text x="1356" y="1017">Tema de la sesión</text><text x="1356" y="1095">Fecha de la sesión</text><text x="1356" y="1169">Código de la sesión</text></g>
                        <rect x="1246" y="1280" width="164" height="50" rx="5" fill="#bd2a22" stroke="#333" /><rect x="1453" y="1280" width="166" height="50" rx="5" fill="#73aa5c" stroke="#333" />
                        <g font-size="18" font-weight="700" text-anchor="middle" class="wt"><text x="1328" y="1311">LIMPIAR</text><text x="1536" y="1311">REGISTRAR</text></g>
                      </g>
                      <g v-if="c.k === 2" class="sk">
                        <rect x="919" y="715" width="1024" height="780" fill="#fbfbfb" stroke="#444" stroke-width="1.800" /><rect x="930" y="700" width="130" height="28" fill="#fff" />
                        <text x="934" y="724" font-size="24" textLength="122">Asistencia</text>
                        <text x="1040" y="846" font-size="35" font-weight="700" textLength="356" lengthAdjust="spacingAndGlyphs">Selecciona la sesión</text>
                        <rect x="1668" y="906" width="221" height="36" rx="18" fill="#fff" stroke="#333" stroke-width="2" /><text x="1676" y="931" font-size="20">⌕ search</text>
                        <rect x="1011" y="963" width="878" height="466" fill="#fff" stroke="#444" stroke-width="2" /><rect x="1011" y="963" width="878" height="30" fill="#c8c8c8" />
                        <rect v-for="i in 4" :key="i" x="1011" :y="885 + i * 108.800" width="861" height="54.400" fill="#ededed" />
                        <path d="M1127 963v466M1531 963v466M1725 963v466M1872 993v436M1011 993h878M1011 1047h861M1011 1102h861M1011 1156h861M1011 1211h861M1011 1265h861M1011 1320h861M1011 1374h861" fill="none" stroke="#444" stroke-width="2" />
                        <g font-size="21"><text x="1018" y="987">código</text><text x="1131" y="987">Tema de capacitación</text><text x="1535" y="987">fecha</text>
                          <template v-for="(r, i) in rows" :key="i"><text x="1018" :y="1027 + i * 54.400">{{ r[0] }}</text><text x="1131" :y="1027 + i * 54.400">{{ r[2] }}</text><text x="1535" :y="1027 + i * 54.400">{{ r[4] }}</text><rect x="1774" :y="1003 + i * 54.400" width="60" height="34" rx="8" fill="#fff" stroke="#333" stroke-width="2" /><text x="1790" :y="1026 + i * 54.400" font-size="16">Ver</text></template>
                        </g>
                      </g>
                    </svg>
                    <div v-if="c.t" class="card-name"><span v-fit="231">{{ c.t }}</span><svg width="20" height="12" viewBox="0 0 20 12" class="ink thin"><path d="M2 2l8 8 8-8" /></svg></div>
                  </div>
                </div>
              </div>
            </section>

            <section class="canvas">
              <svg width="1376" height="908" viewBox="589 608 1376 908" class="sk">
                <g id="wf-base">
                  <rect x="590" y="611" width="1372" height="904" fill="#fff" />
                  <rect x="590" y="611" width="1372" height="24" fill="#c1c1c1" /><rect x="590" y="634" width="1372" height="47" fill="#ededed" />
                  <path d="M619 637v-17q0-4 4-4h88q4 0 4 4v17z" fill="#ededed" />
                  <g class="ln3"><path d="M625 658h-17M614 652l-7 6 7 6M643 658h17M654 652l7 6-7 6M692 653a8 8 0 1 0 0 10" /></g><path d="M694 648v8h-8z" fill="#333" />
                  <rect x="709.500" y="643.800" width="1238" height="28" rx="14" fill="#fff" stroke="#333" stroke-width="1.500" />
                  <path :d="box(590, 610.500, 1962, 1515) + wob(590, 681, 1962, 681) + wob(886, 681, 886, 1515) + wob(590, 774, 886, 774)" class="ln" />
                  <circle cx="655.500" cy="728" r="28" fill="#fff" stroke="#333" stroke-width="4.500" /><ellipse cx="655.500" cy="721" rx="7.500" ry="8" fill="none" stroke="#333" stroke-width="4.500" /><path d="M639 749q2-12 16.500-12t16.500 12" fill="none" stroke="#333" stroke-width="4.500" />
                  <circle cx="701.500" cy="740.500" r="7.500" fill="#44992b" />
                  <rect x="607" y="793" width="262" height="23" rx="5" fill="#b5b5b5" /><rect x="606" y="791" width="261" height="23" rx="5" fill="#ddd" /><path d="M616 797.500l-4 4.500 4 4.500" class="ln2" />
                  <path d="M599.500 843.500l90 1.500 90-1 98 .5v48l-110-.5-80 1-87.500-1z" fill="#9ebbeb" />
                  <g transform="translate(608.500 861) scale(.95)" fill="#333"><circle cx="5" cy="2" r="2.200" /><path d="M1 6h9v3H8v8H6v-5H4v5H2v-6L0 12z" /><path d="M10 7V2h8v7h-6" fill="none" stroke="#333" stroke-width="1.800" /></g>
                  <path d="M608 910q0-2 2-2h14q2 0 2 2v10q0 2-2 2h-7l-3 4v-4h-4q-2 0-2-2z" fill="#333" /><path d="M611 914h7m2 0h3M611 917.500h3m2 0h7" stroke="#fff" stroke-width="1.400" />
                  <path d="M613 957h12v11h-6" class="ln2" /><circle cx="612" cy="963" r="3" fill="#333" /><path d="M607 972q0-5 5-5t5 5z" fill="#333" />
                  <path d="M610.500 1015v-7q0-5 6-5t6 5v7zM608 1016h17v3h-17z" fill="#333" />
                  <path d="M617 1050l9 3q0 11-9 15-9-4-9-15z" fill="#333" /><path d="M613 1058l3 3 5-5" fill="none" stroke="#fff" stroke-width="2" />
                  <path d="M615 1099v8l6 6a8.500 8.500 0 1 1-6-14zM618 1098a8 8 0 0 1 8 8h-8zM618 1108h8l-2 5z" fill="#333" />
                  <rect x="645" y="1457" width="191" height="23" rx="5" fill="#c4c4c4" /><rect x="642" y="1454" width="192" height="22.500" rx="5" fill="#c13c31" stroke="#333" stroke-width="1.500" />
                  <text v-for="(t, i) in baseTexts" :key="i" :x="t[1]" :y="t[2]" :textLength="t[3]" lengthAdjust="spacingAndGlyphs" :font-size="t[4]" :font-weight="t[5]" :fill="t[6] || '#333'">{{ t[0] }}</text>
                </g>
                <g id="wf-field">
                  <rect x="914" y="714.500" width="1021.500" height="778" fill="#fbfbfb" />
                  <path :d="wob(1309, 714.500, 1935.500, 714.500) + wob(1935.500, 714.500, 1935.500, 1492.500) + wob(914, 1492.500, 1935.500, 1492.500) + wob(914, 714.500, 914, 1492.500) + 'M914 714.500h11'" class="ln" />
                  <rect x="925" y="700" width="384" height="27.500" fill="#fff" />
                  <text x="928" y="722" textLength="377" lengthAdjust="spacingAndGlyphs" font-size="25" font-weight="500">Cronograma de capacitaciones</text>
                  <text x="1039" y="845" textLength="218" lengthAdjust="spacingAndGlyphs" font-size="36" font-weight="700">Cronograma</text>
                </g>
                <g id="wf-cal">
                  <rect x="1040" y="891" width="293" height="284" fill="#fff" />
                  <path :d="box(1040, 891.500, 1333, 1175) + wob(1040, 915.500, 1333, 915.500) + calRows.map((y) => wob(1040, y, 1333, y)).join('') + calCols.map((x) => wob(x, 937.500, x, 1175)).join('')" class="ln" />
                  <path d="M1053 898l-7 4.500 7 4.500M1320 898l7 4.500-7 4.500" class="ln2" />
                  <text x="1152" y="906.500" textLength="68" lengthAdjust="spacingAndGlyphs" font-size="12.500">APRIL 2025</text>
                  <text v-for="(d, i) in 'SMTWTFS'" :key="i" :x="[1045, 1086, 1128, 1169, 1210, 1251, 1291][i]" y="930" font-size="12.500">{{ d }}</text>
                  <circle cx="1055" cy="1064.500" r="9" fill="#9ebbeb" />
                  <text v-for="(d, i) in days" :key="'d' + i" :x="d.x" :y="d.y" font-size="12" font-weight="500" :fill="d.out ? '#d9d9d9' : '#333'">{{ d.n }}</text>
                </g>
                <g id="wf-buttons">
                  <g v-for="b in actionBtns" :key="b.t">
                    <rect x="1482" :y="b.y + 2" width="276" height="50" rx="5" fill="#c4c4c4" />
                    <rect x="1480" :y="b.y" width="276" height="50" rx="5" :fill="b.f" stroke="#333" stroke-width="1.700" />
                    <text :x="b.x" :y="b.y + 30" :textLength="b.w" lengthAdjust="spacingAndGlyphs" font-size="18" font-weight="500">{{ b.t }}</text>
                  </g>
                </g>
                <g id="wf-table">
                  <rect x="987" y="1208" width="852" height="263" fill="#fff" /><rect x="987" y="1208" width="852" height="27" fill="#c9c9c9" />
                  <rect x="987" y="1235" width="836" height="48" fill="#ededed" /><rect x="987" y="1330" width="836" height="48" fill="#ededed" /><rect x="987" y="1426" width="836" height="44" fill="#ededed" />
                  <path :d="box(987.500, 1208, 1839, 1470.500) + wob(987, 1235, 1839, 1235) + rowTop.slice(1, 5).map((y) => wob(987, y, 1823, y)).join('') + wob(1823, 1235, 1823, 1470) + [1089.500, 1453, 1620].map((x) => wob(x, 1208, x, 1470)).join('')" class="ln" />
                  <g font-size="22" font-weight="500">
                    <text x="994" y="1228.500" textLength="69" lengthAdjust="spacingAndGlyphs">código</text><text x="1091" y="1228.500" textLength="227" lengthAdjust="spacingAndGlyphs">Tema de capacitación</text><text x="1454" y="1228.500" textLength="57" lengthAdjust="spacingAndGlyphs">fecha</text><text x="1622" y="1228.500" textLength="136" lengthAdjust="spacingAndGlyphs">dias faltantes</text>
                    <template v-for="(r, i) in rows" :key="i">
                      <text v-for="(x, j) in [994, 1091, 1454, 1622]" :key="j" :x="x" :y="1265 + i * 47.700" :textLength="r[j * 2 + 1]" lengthAdjust="spacingAndGlyphs">{{ r[j * 2] }}</text>
                    </template>
                  </g>
                  <path d="M1828 1243l3-4 3 4M1828 1462l3 4 3-4" class="ln2" /><rect x="1828" y="1287" width="6.500" height="20" rx="3" fill="#999" />
                </g>
              </svg>
            </section>

            <section class="props">
              <h2><span v-fit="341">Capacitaciones home (1)</span></h2>
              <p class="p1"><span v-fit="79">Notes</span></p>
              <p class="p2"><span v-fit="308">Click here to edit notes.</span></p>
            </section>
          </div>
        </section>

        <aside class="rail right">
          <div class="rail-cell"><svg width="42" height="42" viewBox="0 0 42 42" class="ink"><path d="M21 2l8.500 15h-17z" stroke-linejoin="round" /><rect x="2" y="24" width="15" height="15" rx="2" /><circle cx="32" cy="31.500" r="8" /></svg></div>
          <div class="gap2"></div>
          <div class="rail-cell"><svg width="42" height="44" viewBox="0 0 42 44" class="ink"><path d="M1 6h17M25 6h16M25 1v10M1 22h12M13 17v10M21 22h20M1 38h21M29 38h12M29 33v10" /></svg></div>
          <svg class="cm pale" width="50" height="52" viewBox="0 0 50 52"><path d="M2 49V8q0-5 5-5h36q5 0 5 5v25q0 5-5 5H14z" /></svg>
          <svg class="z1 pale" width="42" height="42" viewBox="0 0 42 42"><circle cx="19" cy="19" r="17" /><path d="M31 31l9 9M12 19h14" /></svg>
          <svg class="z2 pale" width="42" height="42" viewBox="0 0 42 42"><circle cx="19" cy="19" r="17" /><path d="M31 31l9 9M12 19h14M19 12v14" /></svg>
          <svg class="z2 pale" width="42" height="42" viewBox="0 0 42 42"><path d="M26 2h14v14M40 2L24 18M16 40H2V26M2 40l16-16" /></svg>
          <svg class="z2 pale" width="42" height="42" viewBox="0 0 42 42"><path d="M14 2H6v38h8M28 2h8v38h-8" /></svg>
          <svg class="z2 pale" width="42" height="42" viewBox="0 0 42 42"><path d="M2 11V7q0-5 5-5h5M30 2h5q5 0 5 5v4M40 31v4q0 5-5 5h-5M12 40H7q-5 0-5-5v-4" /><rect x="10.500" y="12" width="21" height="18" rx="2" /></svg>
          <svg class="ea pale" width="44" height="42" viewBox="0 0 44 42"><path d="M1 3h42M4 3v22q0 4 4 4h28q4 0 4-4V3M22 29L11 40M22 29l11 11" /></svg>
        </aside>
      </div>
      <div class="bottom-shade"></div>
    </main>

    <footer class="dock">
      <div v-for="(d, i) in dockA" :key="i" class="app-icon"><svg width="74" height="74" viewBox="0 0 74 74" v-html="d.s"></svg><i v-if="d.dot" class="dot"></i><b v-if="d.b" class="badge">{{ d.b }}</b></div>
      <span class="sep"></span>
      <div v-for="(d, i) in dockB" :key="'b' + i" class="app-icon"><svg width="74" height="74" viewBox="0 0 74 74" v-html="d.s"></svg><i v-if="d.dot" class="dot"></i><b v-if="d.b" class="badge">{{ d.b }}</b></div>
      <span class="sep"></span>
      <svg class="mini" width="88" height="80" viewBox="0 0 88 80"><rect x="1" y="13" width="86" height="49" fill="#f6f6f6" /><rect x="1" y="13" width="86" height="5" fill="#2c2c30" /><rect x="1" y="18" width="25" height="42" fill="#e6e6e8" /><path d="M28 25h9v7h-9zM28 36h9v12h-9zM28 53h9v7h-9z" fill="#5c5560" /><path d="M40 26h20M40 29h12M40 38h22M40 44h16M40 55h18" stroke="#a7b5cf" stroke-width="1.500" /><rect x="58" y="52" width="28" height="28" rx="7" fill="#fff" /><g transform="translate(53.500 47.500) scale(.5)" v-html="chromeMark"></g></svg>
      <svg class="bin" width="68" height="84" viewBox="0 0 68 84"><path d="M1 10l8 66q1 7 25 7t25-7l8-66z" fill="#64686b" opacity=".88" /><path d="M12 30l5 46M56 30l-5 46" stroke="#85898c" stroke-width="3" opacity=".5" /><ellipse cx="34" cy="10" rx="33" ry="9" fill="#3c4042" stroke="#8b8f91" stroke-width="2" /></svg>
    </footer>
  </div>
</template>

<style>
body { margin: 0; overflow: hidden; }
</style>

<style scoped>
* { box-sizing: border-box; }
.desktop { width: 2880px; height: 1800px; display: flex; flex-direction: column; position: relative; overflow: hidden; font-family: Inter, "Open Sans", sans-serif; background: linear-gradient(90deg, #121a10 0, #1b2a18 12%, #1a2c1f 36%, #2b3a16 46%, #33180e 49%, #1c140e 60%, #2a3014 74%, #5f4226 83%, #1b1a18 88%, #10191c 100%); }
span, b { transform-origin: 0 50%; white-space: nowrap; }
svg { display: block; flex: none; overflow: visible; }

.menubar { height: 48px; flex: none; display: flex; align-items: center; gap: 42px; padding-left: 39px; font-size: 26px; color: #fff; background: linear-gradient(90deg, #4c4d41, #4a4b3d 50%, #3c3d37); }
.menubar span { display: inline-block; position: relative; top: -1px; flex: none; }
.apple { margin-right: -2px; position: relative; top: -2px; }
.menubar .app-name { font-weight: 700; }
.status { margin-left: auto; display: flex; align-items: center; padding-right: 39px; height: 48px; }
.s-zm { margin-left: 35px; }
.s-play { margin-left: 33px; }
.s-bat { margin-left: 35px; }
.s-wifi { margin-left: 37px; }
.s-find { margin-left: 40px; }
.s-cc { margin-left: 39px; }
.s-siri { margin: 0 33px 0 35px; }

.window { height: 1610px; margin-top: 2px; flex: none; display: flex; flex-direction: column; border-radius: 20px; overflow: hidden; position: relative; background: #3a2d3b; box-shadow: 0 0 0 2px #101110, 0 4px 24px #000; }
.tabstrip { height: 80px; flex: none; display: flex; align-items: center; background: #8dabe4; border-top: 2px solid #b2c7ef; padding-left: 42px; position: relative; }
.light { width: 24px; height: 24px; border-radius: 50%; margin-right: 16px; flex: none; }
.red { background: #ec6a5e; }
.yellow { background: #f4bf4f; }
.green { background: #61c554; margin-right: 34px; }
.favs { display: flex; width: 2388px; flex: none; position: relative; top: -1px; }
.fav { width: 27.95px; height: 32px; flex: none; overflow: hidden; border-right: 1.500px solid #c6d5f3; }
.fav.wide { width: 29.9px; border-right-width: 3px; }
.active-tab { position: absolute; left: 2548px; bottom: 0; }
.plus { margin-left: 96px; position: relative; top: -1px; }
.tab-menu { margin-left: auto; margin-right: 12px; width: 56px; height: 56px; border-radius: 20px; background: #cedaf4; display: flex; align-items: center; justify-content: center; }
.toolbar { height: 94px; flex: none; display: flex; align-items: center; background: #cedaf4; border-bottom: 2px solid #a9b4cb; }
.t-back { margin-left: 30px; }
.t-fwd { margin-left: 44px; }
.t-rel { margin-left: 44px; }
.url { margin-left: 38px; width: 2472px; height: 68px; border-radius: 34px; background: #f6f8fd; display: flex; align-items: center; flex: none; }
.site { width: 48px; height: 48px; margin-left: 10px; border-radius: 50%; background: #cedaf4; display: flex; align-items: center; justify-content: center; }
.url-text { margin-left: 16px; font-size: 28.5px; color: #6a6d73; display: inline-block; }
.url-text b { font-weight: 400; color: #1d2026; }
.tr { margin-left: auto; margin-right: 31px; }
.star { margin-right: 32px; }
.me { margin-left: 32px; width: 40px; height: 40px; border-radius: 50%; background: #de742c; color: #fff; font-size: 20px; display: flex; align-items: center; justify-content: center; }
.kebab { margin-left: 48px; fill: #22262e; }

.bq-head { height: 72px; flex: none; display: flex; align-items: center; color: #f7f3f0; font-size: 26px; padding-left: 12px; font-weight: 300; }
.bq-head span, .brand { display: inline-block; flex: none; }
.bq-head svg:not(.logo):not(.user) { fill: none; stroke: #f7f3f0; stroke-width: 2.4; stroke-linecap: round; stroke-linejoin: round; }
.brand { margin-left: 12px; font-weight: 700; font-size: 27px; }
.bq-head .chev { width: 20px; height: 12px; position: relative; top: 4px; stroke-width: 2; }
.c1 { margin-left: 17px; }
.proj { margin-left: 38px; }
.p-two { margin-left: 39px; }
.proj + .chev { margin-left: 14px; }
.undo { margin-left: 229px; opacity: .35; }
.redo { margin-left: 31px; opacity: .35; }
.pencil { margin-left: 33px; }
.edit { margin-left: 19px; }
.c2 { margin-left: 15px; }
.trash { margin-left: 38px; }
.share { margin-left: auto; }
.user { margin: 0 15px 0 39px; }

.app { flex: 1; display: flex; min-height: 0; }
.rail { width: 72px; flex: none; display: flex; flex-direction: column; align-items: center; background: #3a2d3b; }
.rail-gap { height: 254px; flex: none; }
.rail-cell { width: 72px; height: 72px; flex: none; background: #f8f3ed; display: flex; align-items: center; justify-content: center; }
.gap2 { height: 182px; flex: none; }
.ink { fill: none; stroke: #2e1f3b; stroke-width: 2.6; stroke-linecap: round; }
.ink.thin { stroke-width: 2; }
.pale { fill: none; stroke: #fbf9f8; stroke-width: 2.6; stroke-linecap: round; stroke-linejoin: round; }
.r-plus { margin-top: 20px; }
.r-up { margin-top: 48px; }
.r-down { margin-top: 53px; }
.r-music { margin-top: 792px; }
.cm { margin-top: 12px; }
.z1 { margin-top: 259px; }
.z2 { margin-top: 46px; }
.ea { margin-top: 264px; }

.center { width: 2736px; flex: none; display: flex; flex-direction: column; background: #f8f3ed; }
.tabs { height: 74px; flex: none; display: flex; align-items: center; border-bottom: 2px solid #ddd9da; font-size: 24px; font-weight: 600; color: #2e1f3b; padding-left: 9px; }
.tabs span { display: inline-block; flex: none; }
.seg { width: 621px; height: 56px; flex: none; border-radius: 16px; background: #dcd8da; display: flex; align-items: center; gap: 49.5px; padding-left: 7px; }
.tabs .seg-on { width: 183px; height: 48px; line-height: 48px; border-radius: 12px; background: #fff; padding-left: 24px; box-shadow: 0 2px 5px rgba(0, 0, 0, .15); margin-right: -24.5px; }
.tabs .common { margin-left: 17px; margin-right: -16px; width: 139px; height: 55px; line-height: 51px; border-radius: 10px; background: #fff; border: 2px solid #dcd8da; padding-left: 16px; color: #3c3543; }
.cat { margin-left: 49px; }
.tabs .search { margin-left: auto; margin-right: 8px; width: 330px; height: 56px; line-height: 52px; border-radius: 12px; background: #fff; border: 2px solid #dcd8da; padding-left: 25px; color: #9ea3b3; font-weight: 400; font-size: 25.5px; }
.controls { height: 180px; flex: none; display: flex; border-bottom: 4px solid #dcd8da; padding: 26px 0 0 14px; overflow: hidden; position: relative; }
.control { flex: none; display: flex; flex-direction: column; align-items: center; }
.control-name { font-size: 24.5px; font-weight: 300; color: #2e1f3b; line-height: 30px; }
.control-name.shifted { padding-right: 20px; }
.control-name span { display: inline-block; }
.fade { position: absolute; right: 0; top: 0; width: 76px; height: 176px; background: linear-gradient(90deg, rgba(120, 120, 110, 0), rgba(120, 120, 110, .42)); }

.panes { flex: 1; display: flex; min-height: 0; }
.wf { width: 384px; flex: none; border-right: 4px solid #dcd8da; display: flex; flex-direction: column; }
.wf-head { height: 73px; flex: none; display: flex; align-items: center; padding-left: 16px; color: #2e1f3b; font-size: 27px; border-bottom: 1px solid #e2dddb; }
.wf-head b { font-weight: 600; display: inline-block; flex: none; }
.grid-btn { width: 56px; height: 56px; flex: none; margin: 0 22px 0 81px; border-radius: 12px; background: #dcd8da; display: flex; align-items: center; justify-content: center; }
.cards { flex: 1; min-height: 0; overflow: hidden; }
.card-wrap { padding-left: 40px; margin-bottom: 36px; }
.card-wrap.sel { padding: 10px 16px 10px 32px; border: solid #d3ddf7; border-width: 5px 4px 8px 8px; background: #aebff0; margin-bottom: 18px; }
.card { width: 320px; height: 301.5px; border-radius: 12px; background: #fff; padding: 25px 8px 0; display: flex; flex-direction: column; }
.card-name { display: flex; align-items: center; gap: 15px; justify-content: flex-end; padding-right: 1px; margin-top: 34px; font-size: 26px; font-weight: 300; line-height: 34px; color: #2e1f3b; }
.card-name span { display: inline-block; flex: none; }
.card-name svg { position: relative; top: 4px; }

.canvas { flex: 1; background: #fff; padding: 58px 0 0 133px; }
.sk, .thumb { fill: #333; }
.ln { fill: none; stroke: #333; stroke-width: 1.5; }
.ln2 { fill: none; stroke: #333; stroke-width: 1.6; stroke-linecap: round; }
.ln3 { fill: none; stroke: #333; stroke-width: 2.2; stroke-linecap: round; }
.wt { fill: #fff; }

.props { width: 684px; flex: none; border-left: 4px solid #dcd8da; color: #2e1f3b; }
.props span { display: inline-block; }
.props h2 { margin: 0; height: 73px; line-height: 73px; border-bottom: 1.500px solid #dcd8da; padding-left: 16px; font-size: 27px; font-weight: 600; }
.props p { margin: 0; padding-left: 24px; font-size: 26px; line-height: 40px; }
.props .p1 { padding-top: 26px; font-weight: 400; }
.props .p2 { padding-top: 17px; font-weight: 300; }
.bottom-shade { position: absolute; left: 72px; right: 72px; bottom: 0; height: 84px; background: linear-gradient(180deg, rgba(0, 0, 0, 0), rgba(0, 0, 0, .1)); }

.dock { position: absolute; left: 83px; top: 1668px; width: 2714px; height: 122px; border-radius: 38px; border: 2px solid rgba(150, 155, 145, .45); display: flex; align-items: flex-start; gap: 26.6px; padding: 17px 0 0 16px; background: linear-gradient(90deg, #202a1c 0, #1d2622 18%, #1f2a20 30%, #2d351e 44%, #2a211a 50%, #2a2019 58%, #2a2319 66%, #262c24 78%, #443223 88%, #1c2223 93%); }
.app-icon { width: 74px; height: 74px; position: relative; flex: none; }
.dot { position: absolute; left: 33px; top: 91px; width: 8px; height: 8px; border-radius: 50%; background: #a5aca4; }
.badge { position: absolute; left: 50px; top: -10px; min-width: 36px; height: 36px; border-radius: 18px; background: #dd4b3e; color: #fff; font-size: 22px; font-weight: 400; line-height: 36px; text-align: center; padding: 0 2px; letter-spacing: -1px; }
.sep { width: 2px; height: 90px; margin: -3px 8px 0; background: #5b5f58; flex: none; }
.mini { margin-left: -8px; }
.bin { margin: -3px 0 0 -1px; }
</style>
